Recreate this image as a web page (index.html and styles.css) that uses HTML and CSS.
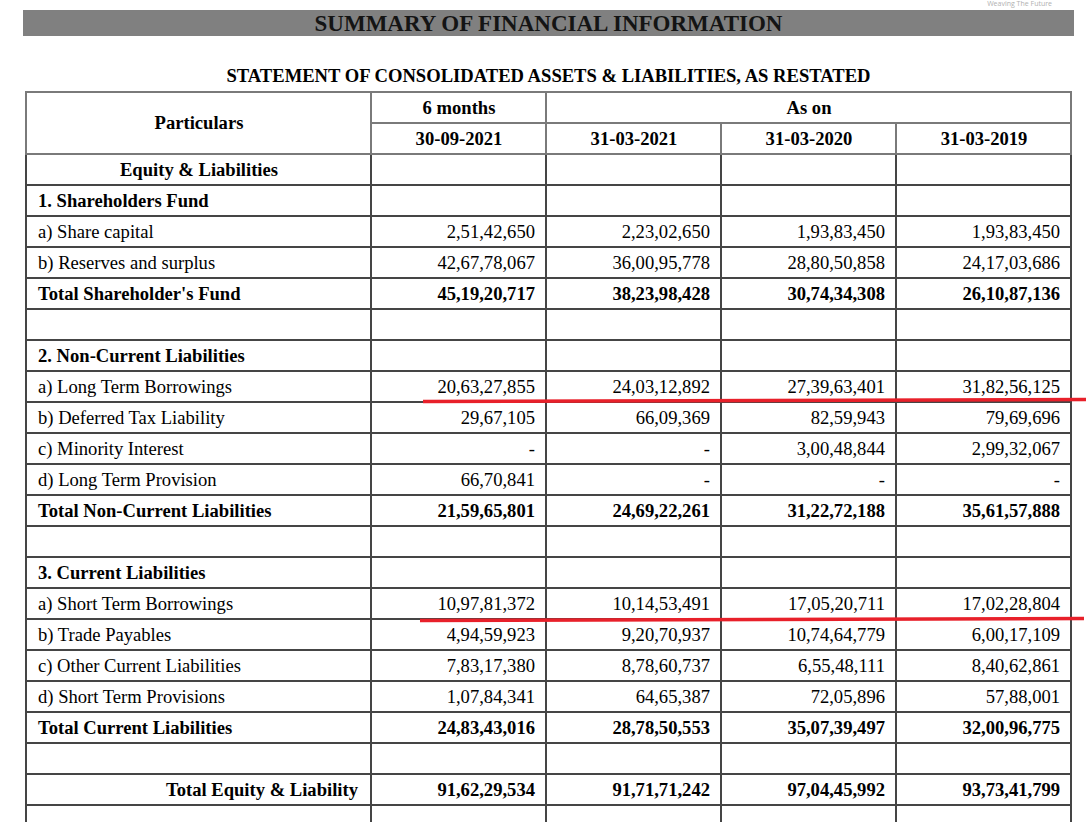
FILE: index.html
```html
<!DOCTYPE html>
<html>
<head>
<meta charset="utf-8">
<link rel="stylesheet" href="styles.css">
</head>
<body>
<div class="page">
  <div class="brand">Weaving The Future</div>
  <div class="banner">SUMMARY OF FINANCIAL INFORMATION</div>
  <div class="sheet">
    <div class="subtitle">STATEMENT OF CONSOLIDATED ASSETS &amp; LIABILITIES, AS RESTATED</div>
    <table class="fin">
      <colgroup>
        <col class="c-label"><col class="c-num"><col class="c-num"><col class="c-num"><col class="c-num">
      </colgroup>
      <thead>
        <tr class="h1">
          <th rowspan="2" class="head-label">Particulars</th>
          <th>6 months</th>
          <th colspan="3">As on</th>
        </tr>
        <tr class="h2">
          <th>30-09-2021</th><th>31-03-2021</th><th>31-03-2020</th><th>31-03-2019</th>
        </tr>
      </thead>
      <tbody>
        <tr class="b"><td class="center">Equity &amp; Liabilities</td><td></td><td></td><td></td><td></td></tr>
        <tr class="b"><td>1. Shareholders Fund</td><td></td><td></td><td></td><td></td></tr>
        <tr><td>a) Share capital</td><td>2,51,42,650</td><td>2,23,02,650</td><td>1,93,83,450</td><td>1,93,83,450</td></tr>
        <tr><td>b) Reserves and surplus</td><td>42,67,78,067</td><td>36,00,95,778</td><td>28,80,50,858</td><td>24,17,03,686</td></tr>
        <tr class="b"><td>Total Shareholder's Fund</td><td>45,19,20,717</td><td>38,23,98,428</td><td>30,74,34,308</td><td>26,10,87,136</td></tr>
        <tr><td></td><td></td><td></td><td></td><td></td></tr>
        <tr class="b"><td>2. Non-Current Liabilities</td><td></td><td></td><td></td><td></td></tr>
        <tr><td>a) Long Term Borrowings</td><td>20,63,27,855</td><td>24,03,12,892</td><td>27,39,63,401</td><td>31,82,56,125</td></tr>
        <tr><td>b) Deferred Tax Liability</td><td>29,67,105</td><td>66,09,369</td><td>82,59,943</td><td>79,69,696</td></tr>
        <tr><td>c) Minority Interest</td><td>-</td><td>-</td><td>3,00,48,844</td><td>2,99,32,067</td></tr>
        <tr><td>d) Long Term Provision</td><td>66,70,841</td><td>-</td><td>-</td><td>-</td></tr>
        <tr class="b"><td>Total Non-Current Liabilities</td><td>21,59,65,801</td><td>24,69,22,261</td><td>31,22,72,188</td><td>35,61,57,888</td></tr>
        <tr><td></td><td></td><td></td><td></td><td></td></tr>
        <tr class="b"><td>3. Current Liabilities</td><td></td><td></td><td></td><td></td></tr>
        <tr><td>a) Short Term Borrowings</td><td>10,97,81,372</td><td>10,14,53,491</td><td>17,05,20,711</td><td>17,02,28,804</td></tr>
        <tr><td>b) Trade Payables</td><td>4,94,59,923</td><td>9,20,70,937</td><td>10,74,64,779</td><td>6,00,17,109</td></tr>
        <tr><td>c) Other Current Liabilities</td><td>7,83,17,380</td><td>8,78,60,737</td><td>6,55,48,111</td><td>8,40,62,861</td></tr>
        <tr><td>d) Short Term Provisions</td><td>1,07,84,341</td><td>64,65,387</td><td>72,05,896</td><td>57,88,001</td></tr>
        <tr class="b"><td>Total Current Liabilities</td><td>24,83,43,016</td><td>28,78,50,553</td><td>35,07,39,497</td><td>32,00,96,775</td></tr>
        <tr><td></td><td></td><td></td><td></td><td></td></tr>
        <tr class="b"><td class="right">Total Equity &amp; Liability</td><td>91,62,29,534</td><td>91,71,71,242</td><td>97,04,45,992</td><td>93,73,41,799</td></tr>
        <tr><td></td><td></td><td></td><td></td><td></td></tr>
        <tr><td></td><td></td><td></td><td></td><td></td></tr>
      </tbody>
    </table>
  </div>
  <svg class="marks" width="1091" height="822" viewBox="0 0 1091 822">
    <line x1="423" y1="401.5" x2="1086" y2="399.5" stroke="#e8202a" stroke-width="3.5"/>
    <line x1="420" y1="620.5" x2="1084" y2="618.5" stroke="#e8202a" stroke-width="3.5"/>
  </svg>
</div>
</body>
</html>
```
FILE: styles.css
```css
html, body {
  margin: 0;
  padding: 0;
  background: #ffffff;
}
.page {
  position: relative;
  width: 1091px;
  height: 822px;
  overflow: hidden;
  font-family: "Liberation Serif", "Times New Roman", serif;
  color: #000;
}
.brand {
  height: 10px;
  font-family: "Open Sans", "DejaVu Sans", sans-serif;
  font-size: 7px;
  line-height: 7px;
  color: #b0b0b0;
  text-align: right;
  padding-right: 39px;
  overflow: hidden;
}
.banner {
  margin-left: 23px;
  width: 1051px;
  height: 26px;
  background: #808080;
  color: #141414;
  font-weight: bold;
  font-size: 23px;
  line-height: 27px;
  text-align: center;
}
.sheet {
  margin-left: 25px;
  width: 1047px;
}
.subtitle {
  margin-top: 30px;
  height: 25px;
  font-weight: bold;
  font-size: 18.6px;
  line-height: 20px;
  text-align: center;
}
.fin {
  border-collapse: collapse;
  table-layout: fixed;
  width: 1047px;
  font-size: 18.6px;
}
.c-label { width: 345px; }
.c-num { width: 175px; }
.fin th, .fin td {
  border: 2px solid #454545;
  height: 29px;
  padding: 0 10px 0 11px;
  line-height: 20px;
  white-space: nowrap;
  overflow: hidden;
}
.fin th {
  font-weight: bold;
  text-align: center;
  border-color: #7a7a7a;
}
.fin td {
  text-align: right;
}
.fin td:first-child {
  text-align: left;
}
.fin td.center {
  text-align: center;
}
.fin td.right {
  text-align: right;
  padding-right: 12px;
}
.fin tr.b td {
  font-weight: bold;
}
.marks {
  position: absolute;
  left: 0;
  top: 0;
  pointer-events: none;
}
```
